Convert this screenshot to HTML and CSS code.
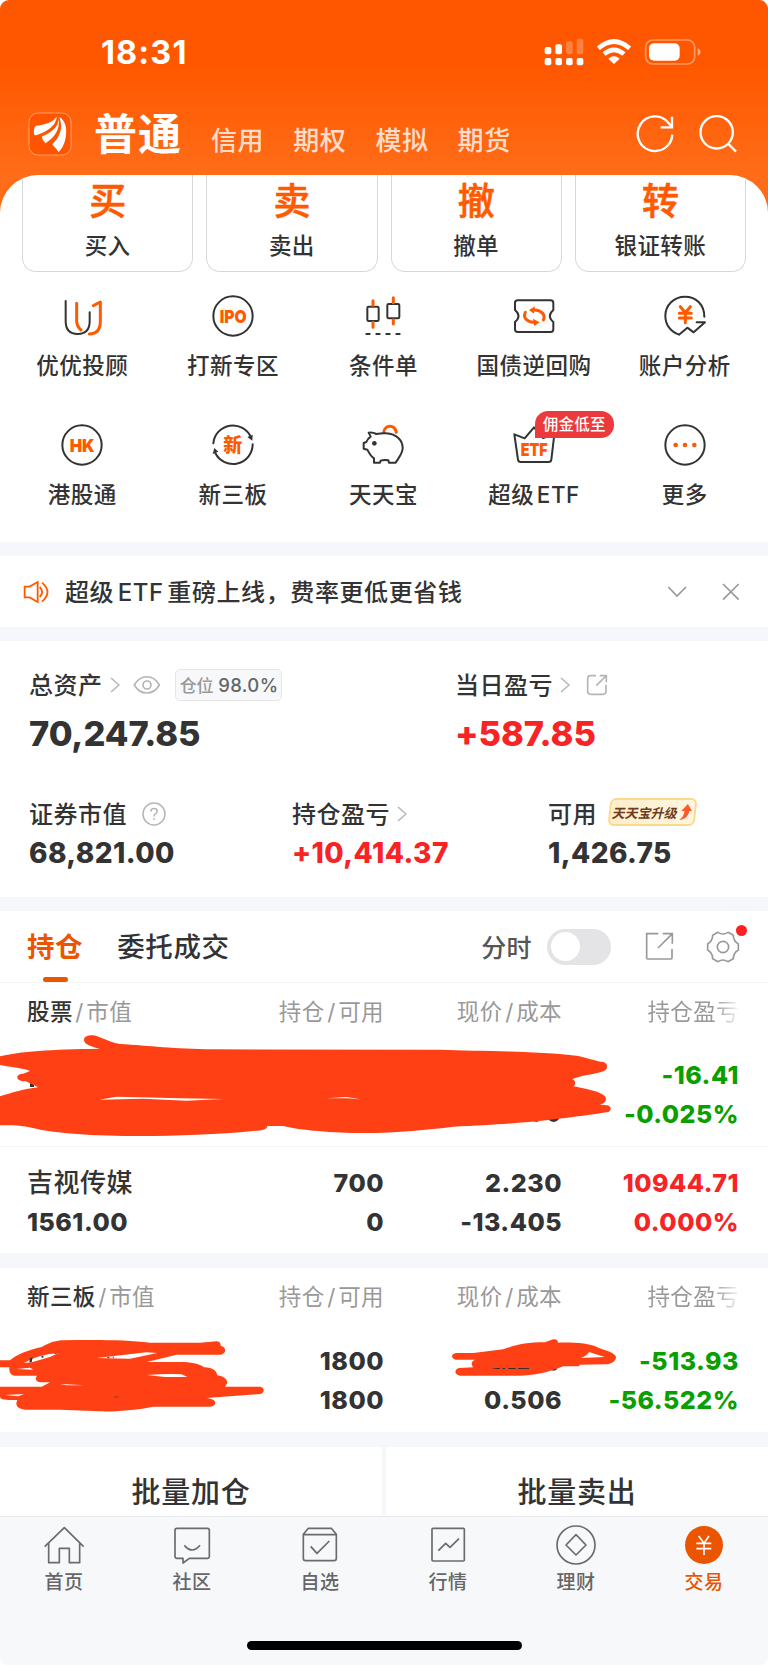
FILE: index.html
```html
<!DOCTYPE html>
<html lang="zh-CN">

<head>
    <meta charset="UTF-8">
    <meta name="viewport" content="width=device-width, initial-scale=1.0">
    <title>交易</title>
    <link rel="stylesheet" href="styles.css">
</head>

<body>
    <div class="phone">
        <!-- 顶部 -->
        <div class="top">
            <div class="status">
                <span class="time">18:31</span>
                <div class="status-icons">
                    <svg width="40" height="28" viewBox="494 113 120 84" fill="#fff">
                        <rect x="496" y="140" width="20" height="22" rx="6" />
                        <rect x="528" y="132" width="20" height="30" rx="6" />
                        <rect x="560" y="123" width="20" height="39" rx="6" opacity=".25" />
                        <rect x="592" y="115" width="20" height="47" rx="6" opacity=".25" />
                        <rect x="496" y="173" width="20" height="22" rx="6" />
                        <rect x="528" y="173" width="20" height="22" rx="6" />
                        <rect x="560" y="173" width="20" height="22" rx="6" />
                        <rect x="592" y="173" width="20" height="22" rx="6" />
                    </svg>
                    <svg class="wifi" width="36" height="28" viewBox="650 113 108 84" fill="none" stroke="#fff" stroke-width="14">
                        <path d="M657 144 Q704 103 751 144" />
                        <path d="M674 161 Q704 136 734 161" />
                        <path d="M704 191 L687 175 Q704 161 721 175 Z" fill="#fff" stroke="none" />
                    </svg>
                    <svg class="battery" width="58" height="28" viewBox="793 113 174 84">
                        <rect x="798" y="119" width="147" height="72" rx="22" fill="none" stroke="#fff" stroke-opacity=".4" stroke-width="5" />
                        <rect x="808" y="129" width="92" height="52" rx="15" fill="#fff" />
                        <path d="M954 143 Q963 147 963 155 Q963 163 954 167 Z" fill="#fff" opacity=".5" />
                    </svg>
                </div>
            </div>
            <div class="nav">
                <svg class="logo" width="44" height="44" viewBox="85 337 132 132">
                    <rect x="88" y="340" width="126" height="126" rx="27" fill="#ff5500" stroke="#fff" stroke-opacity=".4" stroke-width="3" />
                    <g fill="#fff">
                        <path d="M104 405 C101 395 103 382 109 378 C135 376 158 368 171 351 C170 374 150 390 125 401 C114 405 108 410 104 405 Z" />
                        <path d="M175 351 C180 372 168 392 128 410 C125 417 132 423 137 431 C160 416 186 390 175 351 Z" />
                        <path d="M179 352 C197 362 202 386 199 405 C197 428 188 447 176 457 C172 448 162 441 158 434 C182 410 191 384 179 352 Z" />
                    </g>
                </svg>
                <div class="types">
                    <a class="current">普通</a>
                    <a>信用</a>
                    <a>期权</a>
                    <a>模拟</a>
                    <a>期货</a>
                </div>
                <svg class="refresh" width="38" height="38" viewBox="770 346 114 114" fill="none" stroke="#fff" stroke-width="7">
                    <path d="M879 405 A52 52 0 1 1 867 369 L876 380" />
                    <path d="M878 351 V383 H844" />
                </svg>
                <svg class="search" width="38" height="38" viewBox="958 344 114 114" fill="none" stroke="#fff" stroke-width="7">
                    <circle cx="1011" cy="396" r="48.5" />
                    <path d="M1045 430 L1069 454" />
                </svg>
            </div>
        </div>

        <div class="sheet">
            <div class="actions">
                <div class="action"><b>买</b><span>买入</span></div>
                <div class="action"><b>卖</b><span>卖出</span></div>
                <div class="action"><b>撤</b><span>撤单</span></div>
                <div class="action"><b>转</b><span>银证转账</span></div>
            </div>

            <ul class="menu">
                <li>
                    <svg viewBox="182 42 132 132">
                        <path d="M199 63 V124 C199 150 213 162 235 162 C257 162 271 150 271 124 V97" />
                        <path class="o" d="M232 70 V124 Q233 140 245 150 M282 77 L303 66 V124 C303 150 290 162 270 162" />
                    </svg>
                    <span>优优投顾</span>
                </li>
                <li>
                    <svg viewBox="634 42 132 132">
                        <circle cx="700" cy="108" r="59" />
                        <text x="660" y="128" font-size="54" textLength="81" lengthAdjust="spacingAndGlyphs">IPO</text>
                    </svg>
                    <span>打新专区</span>
                </li>
                <li>
                    <svg viewBox="1085 42 132 132">
                        <rect x="1104" y="80" width="34" height="43" rx="4" />
                        <rect x="1164" y="72" width="36" height="43" rx="4" />
                        <path class="o" d="M1121 62 V76 M1121 127 V142 M1182 53 V68 M1182 119 V132" />
                        <path d="M1101 162 H1208" stroke-dasharray="10 20" />
                    </svg>
                    <span>条件单</span>
                </li>
                <li>
                    <svg viewBox="398 42 132 132">
                        <path d="M415 61 H514 Q522 61 522 69 V90 Q501 108 522 126 V148 Q522 156 514 156 H415 Q407 156 407 148 V126 Q428 108 407 90 V69 Q407 61 415 61 Z" />
                        <path class="o" d="M438 97 C430 112 442 126 464 127 M492 120 C500 104 486 91 466 90" />
                        <path class="of" d="M461 116 L481 127 L465 138 Z M467 79 L449 90 L464 101 Z" />
                    </svg>
                    <span>国债逆回购</span>
                </li>
                <li>
                    <svg viewBox="850 42 132 132">
                        <path d="M974 110 C974 75 950 50 916 50 C883 50 857 76 857 108 C857 135 874 156 898 164 L923 143 L942 157 L976 127 H951" />
                        <path class="o" d="M902 80 L917 98 L932 80 M917 98 V128 M899 100 H935 M899 114 H935" />
                    </svg>
                    <span>账户分析</span>
                </li>
                <li>
                    <svg viewBox="182 428 132 132">
                        <circle cx="248" cy="494" r="59" />
                        <text x="211" y="514" font-size="54" textLength="75" lengthAdjust="spacingAndGlyphs">HK</text>
                    </svg>
                    <span>港股通</span>
                </li>
                <li>
                    <svg viewBox="634 428 132 132">
                        <path d="M641 489 A59 59 0 0 1 754 471 M759 492 A59 59 0 0 1 647 518" />
                        <path class="df" d="M743 470 L759 463 L758 481 Z M639 521 L644 503 L656 514 Z" />
                        <text x="671" y="515" font-size="57">新</text>
                    </svg>
                    <span>新三板</span>
                </li>
                <li>
                    <svg viewBox="1085 428 132 132">
                        <path class="o" d="M1153 456 C1156 432 1186 432 1191 456" />
                        <path fill="#fff" d="M1108 457 Q1120 455 1131 461 Q1148 458 1160 459 C1192 461 1210 480 1210 503 C1210 520 1198 532 1189 547 H1169 L1167 540 Q1154 537 1144 541 L1142 547 H1124 V534 C1114 528 1109 518 1104 508 L1093 505 V488 L1101 485 Q1104 476 1114 469 Z" />
                        <circle class="df" cx="1125" cy="489" r="7" />
                    </svg>
                    <span>天天宝</span>
                </li>
                <li>
                    <svg viewBox="398 428 132 132">
                        <path d="M405 462 L436 474 L464 441 L491 473 L525 462 L516 538 Q515 545 508 545 H424 Q417 545 416 538 Z" />
                        <text x="424" y="526" font-size="54" textLength="81" lengthAdjust="spacingAndGlyphs">ETF</text>
                    </svg>
                    <em class="badge">佣金低至</em>
                    <span>超级 ETF</span>
                </li>
                <li>
                    <svg viewBox="850 428 132 132">
                        <circle cx="916" cy="494" r="59" />
                        <path class="of" d="M881 494 a7 7 0 1 0 14 0 a7 7 0 1 0 -14 0 M909 494 a7 7 0 1 0 14 0 a7 7 0 1 0 -14 0 M937 494 a7 7 0 1 0 14 0 a7 7 0 1 0 -14 0" />
                    </svg>
                    <span>更多</span>
                </li>
            </ul>
        </div>

        <!-- 公告 -->
        <div class="notice">
            <svg width="28" height="24" viewBox="68 118 84 72" fill="none" stroke="#ff5a00" stroke-width="5.5">
                <path d="M73 138 H88 L112 124 V184 L88 170 H73 Z" />
                <path d="M118 139 Q133 154 118 169 M125 126 Q158 154 125 183" />
            </svg>
            <p>超级 ETF 重磅上线，费率更低更省钱</p>
            <svg width="20" height="18" viewBox="860 127 60 54" fill="none" stroke="#999" stroke-width="5">
                <path d="M864 139 L890 166 L917 139" />
            </svg>
            <svg class="close" width="18" height="18" viewBox="1025 127 54 54" fill="none" stroke="#999" stroke-width="5">
                <path d="M1028 130 L1075 177 M1075 130 L1028 177" />
            </svg>
        </div>

        <!-- 资产 -->
        <div class="assets">
            <div class="total">
                <div class="item">
                    <div class="label">总资产
                        <svg class="arrow" width="10" height="16" viewBox="0 0 10 16"><path d="M1 1 L9 8 L1 15" /></svg>
                        <svg class="eye" width="28" height="20" viewBox="398 403 84 60"><path d="M402 433 C420 400 459 400 477 433 C459 465 420 465 402 433 Z" /><circle cx="440" cy="433" r="12" /></svg>
                        <span class="rate">仓位 <i>98.0%</i></span>
                    </div>
                    <div class="num">70,247.85</div>
                </div>
                <div class="item">
                    <div class="label">当日盈亏
                        <svg class="arrow" width="10" height="16" viewBox="0 0 10 16"><path d="M1 1 L9 8 L1 15" /></svg>
                        <svg class="share" width="22" height="22" viewBox="620 402 66 66"><path d="M650 407 H634 Q625 407 625 416 V454 Q625 463 634 463 H671 Q680 463 680 454 V434 M651 437 L680 408 M661 407 H681 V427" /></svg>
                    </div>
                    <div class="num red">+587.85</div>
                </div>
            </div>
            <div class="detail">
                <div class="item">
                    <div class="label">证券市值
                        <svg class="help" width="24" height="24" viewBox="0 0 24 24"><circle cx="12" cy="12" r="11" /><path d="M8.8 9.5 Q8.8 6.5 12 6.5 Q15.2 6.5 15.2 9.2 Q15.2 11 13 12.2 Q12 12.9 12 14.5 M12 16.3 V18.1" /></svg>
                    </div>
                    <div class="num">68,821.00</div>
                </div>
                <div class="item">
                    <div class="label">持仓盈亏
                        <svg class="arrow" width="10" height="16" viewBox="0 0 10 16"><path d="M1 1 L9 8 L1 15" /></svg>
                    </div>
                    <div class="num red">+10,414.37</div>
                </div>
                <div class="item">
                    <div class="label">可用
                        <span class="upgrade"><i>天天宝升级</i>
                            <svg width="12" height="16" viewBox="0 0 11 15"><path d="M6.5 0 L11 6.5 H8.5 C8.5 11 5 14.5 0 15 C3 12.5 4 10 4 6.5 H1 Z" fill="#fb5a2c" /></svg>
                        </span>
                    </div>
                    <div class="num">1,426.75</div>
                </div>
            </div>
        </div>

        <!-- 持仓列表 -->
        <div class="hold">
            <div class="tabs">
                <a class="current">持仓</a>
                <a>委托成交</a>
                <span class="minute">分时</span>
                <span class="switch"></span>
                <svg width="29" height="29" viewBox="794 127 87 87" fill="none" stroke="#999" stroke-width="5">
                    <path d="M834 132 H799 V205 Q799 208 802 208 H872 Q875 208 875 205 V178 M833 175 L874 134 M847 132 H876 V162" />
                </svg>
                <div class="gear">
                    <svg width="34" height="34" viewBox="978 119 102 102" fill="none" stroke="#999" stroke-width="5">
                        <path d="M1014 126 Q1029 136 1044 126 L1060 135 Q1060 152 1075 161 V179 Q1060 188 1060 205 L1044 214 Q1029 204 1014 214 L998 205 Q998 188 983 179 V161 Q998 152 998 135 Z" stroke-linejoin="round" />
                        <circle cx="1029" cy="170" r="17" />
                    </svg>
                    <i></i>
                </div>
            </div>
            <div class="row head">
                <span><b>股票</b><i>/</i>市值</span>
                <span>持仓<i>/</i>可用</span>
                <span>现价<i>/</i>成本</span>
                <span class="fade">持仓盈亏</span>
            </div>
            <div class="row first">
                <span></span>
                <span></span>
                <span></span>
                <span class="green">-16.41<br>-0.025%</span>
                <svg class="ink ink-a" width="614" height="107" viewBox="0 430 1842 321">
                    <path class="dot" d="M90 576 H102 V592 H90 Z M1597 686 H1626 Q1612 705 1597 690 Z M1640 680 H1681 Q1674 697 1661 697 Q1647 697 1640 680 Z" />
                    <path d="M0 500 C60 485 150 479 300 477 C270 470 250 462 252 448 C256 436 275 434 295 441 C320 450 340 460 360 463 C450 468 520 478 640 479 L1320 480 C1450 484 1650 486 1735 499 C1770 508 1790 515 1810 517 C1825 522 1825 538 1810 545 C1780 555 1730 560 1717 569 C1728 573 1728 585 1720 590 C1760 598 1800 605 1815 620 C1822 632 1815 642 1800 645 L1820 647 C1836 648 1836 666 1820 668 C1780 674 1720 683 1670 688 C1600 697 1500 705 1360 711 C1280 720 1200 730 1090 730 C1000 730 900 722 850 709 H802 C800 720 790 722 760 724 C650 735 500 740 400 739 C250 738 150 728 95 714 C60 706 30 706 0 707 V620 C40 608 70 598 115 593 C95 585 85 577 75 575 C45 575 45 552 70 552 L90 544 C75 536 30 532 0 526 Z" />
                    <path class="gap" d="M298 630 L350 621 L540 626 L670 628 L560 633 L430 627 Z M980 626 L1040 622 L1080 629 L1040 626 Z" />
                </svg>
            </div>
            <div class="row second">
                <span><b>吉视传媒</b><br>1561.00</span>
                <span>700<br>0</span>
                <span>2.230<br>-13.405</span>
                <span class="red">10944.71<br>0.000%</span>
            </div>
        </div>

        <div class="hold">
            <div class="row head">
                <span><b>新三板</b><i>/</i>市值</span>
                <span>持仓<i>/</i>可用</span>
                <span>现价<i>/</i>成本</span>
                <span class="fade">持仓盈亏</span>
            </div>
            <div class="row third">
                <span></span>
                <span>1800<br>1800</span>
                <span><br>0.506</span>
                <span class="green">-513.93<br>-56.522%</span>
                <svg class="ink ink-b" width="267" height="75" viewBox="0 595 801 225">
                    <path d="M0 662 H30 C50 645 80 632 125 622 C150 608 170 602 190 602 C280 600 380 600 450 609 H600 L650 605 C660 606 662 612 662 618 C680 622 680 642 662 645 H530 L440 667 H540 C570 667 600 672 612 683 C640 684 650 695 652 707 C670 710 682 718 682 730 L675 741 H780 C795 742 795 762 780 763 L620 775 C650 777 655 798 630 801 H460 C400 812 350 816 300 815 L180 810 H75 C50 808 45 795 52 781 H25 C8 781 0 778 0 770 V741 H125 L150 728 H120 C105 726 105 712 112 708 L45 708 C30 706 27 695 28 683 H0 Z" />
                    <path class="gap" d="M390 657 L472 640 L440 638 L290 655 Z M72 670 Q110 645 175 640 L150 652 L95 668 Z M440 706 Q500 702 545 704 L562 712 L495 712 Z M180 733 L255 737 L200 737 Z M15 766 L72 763 L55 770 Z M48 688 L90 684 L100 690 Z" />
                    <path class="dot" d="M90 656 L98 652 L95 668 L88 668 Z M122 652 L130 647 L130 655 Z M162 641 L172 639 L168 643 Z M322 652 H328 V655 H322 Z M336 651 H343 L340 655 Z M342 771 H356 V773 H342 Z" />
                </svg>
                <svg class="ink ink-c" width="169" height="42" viewBox="210 590 507 126">
                    <path class="dot" d="M510 684 H533 Q528 694 514 690 Z" />
                    <path d="M228 638 H280 L370 627 C410 612 440 606 495 606 L520 597 C530 596 534 600 534 607 C590 606 630 610 650 620 C680 632 705 637 708 650 C708 662 695 670 680 672 L598 673 V678 H550 C520 690 480 705 420 706 H240 C222 704 222 686 238 683 L280 681 C272 672 274 662 285 658 H228 C212 656 212 640 228 638 Z" />
                    <path class="gap" d="M627 635 L674 650 L602 653 Q622 646 627 635 Z" />
                    <path class="dot" d="M335 685 L350 683 H360 V686 H337 Z M368 683 H375 V686 H366 Z M386 683 H407 V686 H384 Z M415 683 H447 V686 H413 Z" />
                </svg>
            </div>
        </div>

        <div class="batch">
            <a>批量加仓</a>
            <a>批量卖出</a>
        </div>

        <!-- 底部导航 -->
        <ul class="tabbar">
            <li>
                <svg viewBox="129 282 126 126"><path d="M134 350 L193 293 L251 350 M146 340 V398 H178 V355 H208 V398 H239 V340" /></svg>
                <span>首页</span>
            </li>
            <li>
                <svg viewBox="513 282 126 126"><path d="M531 295 H622 Q628 295 628 301 V379 Q628 385 622 385 H568 L549 399 V385 H531 Q525 385 525 379 V301 Q525 295 531 295 Z M553 346 Q577 374 600 346" /></svg>
                <span>社区</span>
            </li>
            <li>
                <svg viewBox="897 282 126 126"><path d="M925 295 H994 L1009 313 V385 Q1009 392 1002 392 H917 Q910 392 910 385 V313 Z M910 314 H1009 M932 349 L951 370 L988 333" /></svg>
                <span>自选</span>
            </li>
            <li>
                <svg viewBox="140 282 126 126"><rect x="155" y="295" width="97" height="98" rx="3" /><path d="M174 362 L196 340 L209 352 L236 326" /></svg>
                <span>行情</span>
            </li>
            <li>
                <svg viewBox="525 282 126 126"><circle cx="588" cy="345" r="57" /><path d="M588 314 L618 345 L588 375 L558 345 Z" /></svg>
                <span>理财</span>
            </li>
            <li class="current">
                <svg viewBox="908 282 126 126"><circle cx="971" cy="345" r="57" /><path d="M955 318 L971 340 L986 318 M971 340 V375 M948 340 H993 M948 356 H993" /></svg>
                <span>交易</span>
            </li>
        </ul>
        <div class="home"></div>
    </div>
</body>

</html>
```

FILE: styles.css
```css
* {
    margin: 0;
    padding: 0;
    box-sizing: border-box;
}

body {
    background-color: #fff;
    font-family: Inter, "Noto Sans CJK SC", sans-serif;
    font-weight: 500;
    color: #333;
}

ul {
    list-style: none;
}

i,
em {
    font-style: normal;
}

svg {
    display: block;
    flex-shrink: 0;
}

.phone {
    width: 768px;
    height: 1665px;
    border-radius: 9px;
    overflow: hidden;
    background-color: #f5f7fa;
}

/* 顶部 */
.top {
    height: 215px;
    margin-bottom: -40px;
    background: linear-gradient(#ff5700 65px, #ff6d18 175px);
    color: #fff;
}

.status {
    display: flex;
    justify-content: space-between;
    height: 104px;
    padding: 38px 66px 0 101px;
}

.time {
    line-height: 30px;
    font-size: 32.5px;
    font-weight: 700;
    letter-spacing: 1.1px;
}

.status-icons {
    display: flex;
}

.wifi {
    margin-left: 12px;
}

.battery {
    margin-left: 12px;
}

.nav {
    display: flex;
    align-items: center;
    height: 60px;
    padding: 0 31px 0 28px;
}

.types {
    display: flex;
    flex: 1;
    align-items: baseline;
    margin-top: 6px;
    margin-left: 22px;
}

.types a {
    margin-right: 29px;
    line-height: 60px;
    font-size: 26px;
    letter-spacing: 0.6px;
    color: rgba(255, 255, 255, 0.8);
}

.types .current {
    font-size: 43px;
    letter-spacing: 1px;
    font-weight: 600;
    color: #fff;
}

.search {
    margin-left: 25px;
}

/* 白色区域 */
.sheet {
    height: 367px;
    border-radius: 38px 38px 0 0;
    background-color: #fff;
    overflow: hidden;
}

.actions {
    display: flex;
    gap: 13px;
    padding: 0 22px;
}

.action {
    flex: 1;
    height: 97px;
    padding-top: 6px;
    border: 1px solid #d8d8d8;
    border-top: 0;
    border-radius: 0 0 14px 14px;
    text-align: center;
}

.action b {
    display: block;
    line-height: 42px;
    font-size: 37px;
    font-weight: 500;
    -webkit-text-stroke: 0.6px #ff5a00;
    color: #ff5a00;
}

.action span {
    display: block;
    margin-top: 8px;
    line-height: 30px;
    font-size: 22.5px;
    letter-spacing: 0.4px;
}

.menu {
    display: grid;
    grid-template-columns: repeat(5, 1fr);
    row-gap: 41px;
    padding: 22px 8px 0 7px;
}

.menu li {
    position: relative;
    display: flex;
    flex-direction: column;
    align-items: center;
    height: 87.5px;
}

.menu svg {
    width: 44px;
    height: 44px;
    fill: none;
    stroke: #333;
    stroke-width: 6px;
    stroke-linejoin: round;
    stroke-linecap: round;
}

.menu svg .o {
    stroke: #ff5a00;
    stroke-width: 9px;
}

.menu svg .of {
    fill: #ff5a00;
    stroke: none;
}

.menu svg .df {
    fill: #333;
    stroke: none;
}

.menu svg text {
    fill: #ff5a00;
    stroke: none;
    font-weight: 900;
}

.menu span {
    margin-top: 13px;
    line-height: 30px;
    font-size: 22.5px;
    letter-spacing: 0.5px;
    word-spacing: -4px;
    white-space: nowrap;
}

.badge {
    position: absolute;
    left: 76px;
    top: -12px;
    width: 79px;
    height: 27px;
    border-radius: 13px 13px 13px 0;
    background-color: #ec3a3c;
    line-height: 27px;
    font-size: 15.5px;
    letter-spacing: 0.3px;
    text-align: center;
    color: #fff;
}

/* 公告 */
.notice {
    display: flex;
    align-items: center;
    height: 71px;
    margin: 14px 0;
    padding: 0 28px 0 23px;
    background-color: #fff;
}

.notice p {
    flex: 1;
    margin-left: 14px;
    padding-bottom: 2px;
    font-size: 24px;
    letter-spacing: 0.6px;
    word-spacing: -3.5px;
}

.close {
    margin-left: 35px;
}

/* 资产 */
.assets {
    height: 256px;
    padding: 26px 29px 0;
    background-color: #fff;
}

.total,
.detail {
    display: flex;
}

.detail {
    margin-top: 39px;
}

.item {
    flex-shrink: 0;
}

.label {
    display: flex;
    align-items: center;
    height: 32px;
    font-size: 24px;
    letter-spacing: 0.5px;
    white-space: nowrap;
}

.label svg {
    margin-top: 3px;
    fill: none;
    stroke: #b5b5b5;
    stroke-width: 1.5px;
}

.label .arrow {
    margin-left: 7px;
}

.label .eye {
    margin-left: 13px;
    stroke-width: 5px;
}

.label .share {
    margin-left: 16px;
    stroke-width: 5px;
}

.label .help {
    margin-left: 15px;
}

.rate {
    width: 107px;
    height: 32px;
    margin-top: 3px;
    margin-left: 14px;
    border: 1px solid #e6e6e9;
    border-radius: 5px;
    background-color: #f7f8fa;
    line-height: 31px;
    font-size: 17px;
    letter-spacing: 0;
    text-align: right;
    padding-right: 2px;
    color: #999;
}

.rate i {
    font-size: 18.5px;
    letter-spacing: 0.4px;
    color: #666;
}

.num {
    font-weight: 800;
}

.total .item {
    width: 426px;
}

.total .num {
    margin-top: 12px;
    line-height: 46px;
    font-size: 34.5px;
    letter-spacing: -0.1px;
}

.detail .item {
    width: 263px;
}

.detail .item:nth-child(2) {
    width: 256px;
}

.detail .num {
    margin-top: 7px;
    line-height: 36px;
    font-size: 28px;
    letter-spacing: 0.4px;
}

.red {
    color: #f72324 !important;
}

.green {
    color: #0a9f00;
}

.upgrade {
    display: flex;
    align-items: center;
    justify-content: center;
    gap: 2px;
    width: 87px;
    height: 28px;
    margin-left: 12px;
    border: 2px solid #fcd98b;
    border-radius: 6px;
    background: linear-gradient(90deg, #fdeecb, #fff6e0);
    transform: skewX(-6deg);
    font-size: 13px;
    font-weight: 700;
    letter-spacing: 0;
    color: #6f3c20;
}

.upgrade i {
    transform: skewX(-8deg);
}

.upgrade svg {
    margin-top: 0;
    stroke: none;
}

/* 持仓 */
.hold {
    margin-top: 14px;
    background-color: #fff;
}

.hold + .hold {
    margin-top: 15px;
}

.tabs {
    display: flex;
    align-items: center;
    height: 72px;
    padding: 0 28px 0 27px;
    border-bottom: 1px solid #f2f3f5;
}

.tabs a {
    position: relative;
    line-height: 70px;
    font-size: 27.5px;
    letter-spacing: 0.6px;
}

.tabs a + a {
    margin-left: 34px;
}

.tabs .current {
    font-weight: 700;
    color: #eb5500;
}

.tabs .current::after {
    content: "";
    position: absolute;
    left: 16px;
    bottom: 0;
    width: 25px;
    height: 5px;
    border-radius: 3px;
    background-color: #eb5500;
}

.minute {
    margin-left: auto;
    padding-bottom: 2px;
    font-size: 25px;
    letter-spacing: 0.4px;
    color: #555;
}

.switch {
    width: 64px;
    height: 36px;
    margin: 0 34px 0 15px;
    padding: 3.5px;
    border-radius: 18px;
    background-color: #e4e4e6;
}

.switch::before {
    content: "";
    display: block;
    width: 29px;
    height: 29px;
    border-radius: 50%;
    background-color: #fff;
}

.gear {
    position: relative;
    margin-left: 32px;
}

.gear i {
    position: absolute;
    right: -7px;
    top: -5px;
    width: 11px;
    height: 11px;
    border-radius: 50%;
    background-color: #f72324;
}

.row {
    position: relative;
    display: grid;
    grid-template-columns: 179px 178px 178px 177px;
    padding: 0 29px 0 27px;
    line-height: 38.7px;
    font-size: 25px;
    font-weight: 800;
    letter-spacing: 0.5px;
}

.row span {
    text-align: right;
    white-space: nowrap;
}

.row span:first-child {
    text-align: left;
}

.row b {
    font-size: 26px;
    font-weight: 500;
}

.head {
    height: 58px;
    line-height: 58px;
    font-size: 22.5px;
    font-weight: 400;
    letter-spacing: 0.4px;
    color: #999;
}

.head b {
    font-size: 22.5px;
    color: #333;
}

.head i {
    margin: 0 2.5px;
}

.fade {
    -webkit-mask-image: linear-gradient(90deg, #000 152px, transparent 180px);
    mask-image: linear-gradient(90deg, #000 152px, transparent 180px);
}

.first {
    height: 106px;
    padding-top: 15px;
    border-bottom: 1px solid #f2f3f5;
}

.second {
    height: 106px;
    padding-top: 17px;
}

.third {
    height: 106px;
    padding-top: 16px;
}

/* 涂抹笔迹 */
.ink {
    position: absolute;
    fill: #ff4015;
}

.ink .gap {
    fill: #fff;
}

.ink .dot {
    fill: #333;
}

.ink-a {
    left: 0;
    top: -8px;
}

.ink-b {
    left: 0;
    top: 12px;
}

.ink-c {
    left: 450px;
    top: 11px;
}

.batch {
    display: flex;
    gap: 4px;
    height: 69px;
    margin-top: 15px;
    overflow: hidden;
}

.batch a {
    flex: 1;
    background-color: #fff;
    line-height: 92px;
    font-size: 29px;
    letter-spacing: 0.8px;
    text-align: center;
}

/* 底部导航 */
.tabbar {
    display: flex;
    height: 125px;
    padding-top: 7px;
    border-top: 1px solid #e8e9ec;
    background-color: #f7f8fa;
}

.tabbar li {
    flex: 1;
    display: flex;
    flex-direction: column;
    align-items: center;
    font-size: 19px;
    line-height: 26px;
    letter-spacing: 0.4px;
    color: #666;
}

.tabbar svg {
    width: 42px;
    height: 42px;
    margin-bottom: 4px;
    fill: none;
    stroke: #6b6b6b;
    stroke-width: 5px;
    stroke-linejoin: round;
}

.tabbar .current {
    color: #eb5500;
}

.tabbar .current circle {
    fill: #eb5500;
    stroke: none;
}

.tabbar .current path {
    stroke: #fff;
}

.home {
    height: 24px;
    background-color: #f7f8fa;
}

.home::before {
    content: "";
    display: block;
    width: 275px;
    height: 9px;
    margin: 0 auto;
    border-radius: 5px;
    background-color: #000;
}
```
